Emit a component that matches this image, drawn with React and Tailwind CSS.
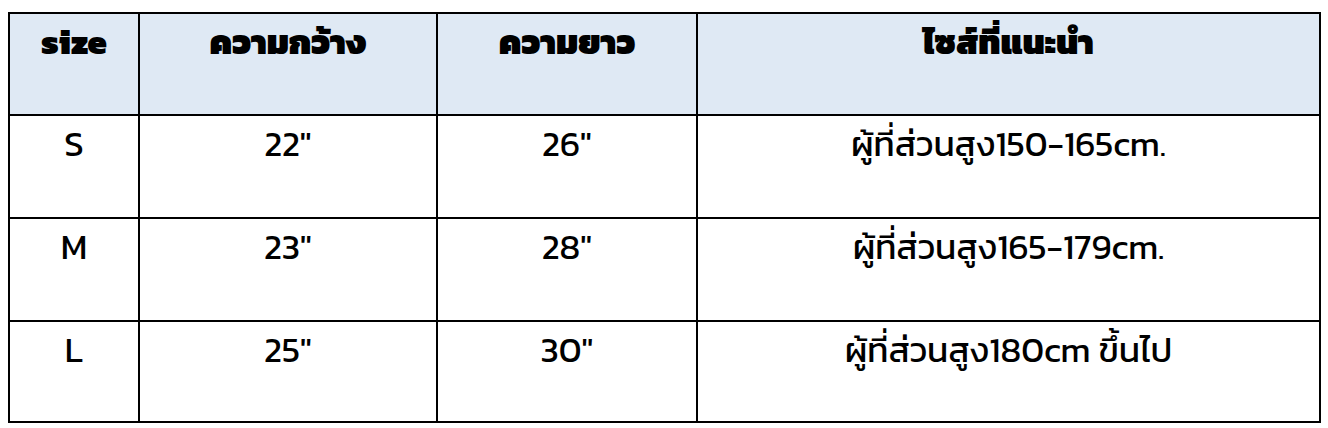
import React from 'react';

const rows = [
  { size: 'S', width: '22"', length: '26"', note: 'ผู้ที่ส่วนสูง150-165cm.' },
  { size: 'M', width: '23"', length: '28"', note: 'ผู้ที่ส่วนสูง165-179cm.' },
  { size: 'L', width: '25"', length: '30"', note: 'ผู้ที่ส่วนสูง180cm ขึ้นไป' },
];

const font = { fontFamily: '"Kanit", "Prompt", "Noto Sans Thai", "Noto Sans", "DejaVu Sans", sans-serif' };

export default function App() {
  return (
    <div className="bg-white w-[1328px] h-[428px] pt-[12px] pl-[8px]" style={font}>
      <table className="table-fixed border-collapse border-[2.5px] border-black w-[1313px] text-black">
        <colgroup>
          <col className="w-[130px]" />
          <col className="w-[298px]" />
          <col className="w-[260px]" />
          <col className="w-[623px]" />
        </colgroup>
        <thead>
          <tr className="h-[102px] bg-[#dfe9f4]">
            <th className="border-[2.5px] border-black align-top pt-[8px] text-[34px] font-black leading-[40px]">size</th>
            <th className="border-[2.5px] border-black align-top pt-[8px] text-[34px] font-black leading-[40px]">ความกว้าง</th>
            <th className="border-[2.5px] border-black align-top pt-[8px] text-[34px] font-black leading-[40px]">ความยาว</th>
            <th className="border-[2.5px] border-black align-top pt-[8px] text-[34px] font-black leading-[40px]">ไซส์ที่แนะนำ</th>
          </tr>
        </thead>
        <tbody>
          {rows.map((r, i) => (
            <tr key={r.size} className={i === 2 ? 'h-[101px]' : 'h-[103px]'}>
              <td className="border-[2.5px] border-black align-top pt-[8px] text-center text-[35px] font-normal leading-[40px]">{r.size}</td>
              <td className="border-[2.5px] border-black align-top pt-[8px] text-center text-[35px] font-normal leading-[40px]">{r.width}</td>
              <td className="border-[2.5px] border-black align-top pt-[8px] text-center text-[35px] font-normal leading-[40px]">{r.length}</td>
              <td className="border-[2.5px] border-black align-top pt-[8px] text-center text-[35px] font-normal leading-[40px]">{r.note}</td>
            </tr>
          ))}
        </tbody>
      </table>
    </div>
  );
}
